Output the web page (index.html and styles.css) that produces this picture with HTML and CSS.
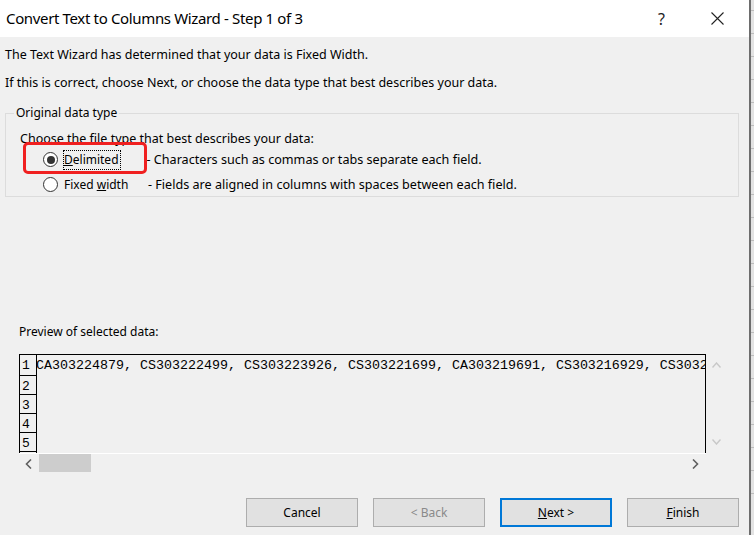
FILE: index.html
```html
<!DOCTYPE html>
<html>
<head>
<meta charset="utf-8">
<link rel="stylesheet" href="styles.css">
</head>
<body>
<div class="screen">
  <div class="dialog">
    <div class="titlebar">
      <span class="title">Convert Text to Columns Wizard - Step 1 of 3</span>
      <span class="help">?</span>
      <svg class="close" width="13" height="13" viewBox="0 0 13 13"><path d="M0.5 0.5 L12.5 12.5 M12.5 0.5 L0.5 12.5" stroke="#222" stroke-width="1.1" fill="none"/></svg>
    </div>
    <div class="body">
      <p class="info first">The Text Wizard has determined that your data is Fixed Width.</p>
      <p class="info second">If this is correct, choose Next, or choose the data type that best describes your data.</p>
      <fieldset class="group">
        <legend>Original data type</legend>
        <div class="choose">Choose the file type that best describes your data:</div>
        <div class="radio-row">
          <span class="radio checked"></span>
          <span class="label focused"><u>D</u>elimited</span>
          <span class="desc">- Characters such as commas or tabs separate each field.</span>
        </div>
        <div class="radio-row">
          <span class="radio"></span>
          <span class="label">Fixed <u>w</u>idth</span>
          <span class="desc">- Fields are aligned in columns with spaces between each field.</span>
        </div>
        <div class="highlight"></div>
      </fieldset>
      <div class="preview-label">Preview of selected data:</div>
      <div class="preview-wrap">
        <div class="preview">
          <div class="rownums">
            <div class="rn first-rn">1</div>
            <div class="rn">2</div>
            <div class="rn">3</div>
            <div class="rn">4</div>
            <div class="rn">5</div>
          </div>
          <div class="data">CA303224879, CS303222499, CS303223926, CS303221699, CA303219691, CS303216929, CS3032</div>
        </div>
        <div class="vscroll">
          <svg width="9" height="6" viewBox="0 0 9 6"><path d="M0.5 5.5 L4.5 1 L8.5 5.5" stroke="#c8c8c8" stroke-width="1.4" fill="none"/></svg>
          <svg width="9" height="6" viewBox="0 0 9 6"><path d="M0.5 0.5 L4.5 5 L8.5 0.5" stroke="#c8c8c8" stroke-width="1.4" fill="none"/></svg>
        </div>
      </div>
      <div class="hscroll">
        <svg class="arrow" width="7" height="10" viewBox="0 0 7 10"><path d="M6 0.5 L1.5 5 L6 9.5" stroke="#606060" stroke-width="1.6" fill="none"/></svg>
        <div class="thumb"></div>
        <div class="track"></div>
        <svg class="arrow" width="7" height="10" viewBox="0 0 7 10"><path d="M1 0.5 L5.5 5 L1 9.5" stroke="#606060" stroke-width="1.6" fill="none"/></svg>
      </div>
      <div class="buttons">
        <button class="btn">Cancel</button>
        <button class="btn disabled">&lt; Back</button>
        <button class="btn default"><u>N</u>ext &gt;</button>
        <button class="btn"><u>F</u>inish</button>
      </div>
    </div>
  </div>
  <div class="sheet">
    <div class="cell"></div><div class="cell"></div><div class="cell"></div><div class="cell"></div>
    <div class="cell"></div><div class="cell"></div><div class="cell"></div><div class="cell"></div>
    <div class="cell"></div><div class="cell"></div><div class="cell"></div><div class="cell"></div>
    <div class="cell"></div><div class="cell"></div><div class="cell"></div><div class="cell"></div>
    <div class="cell"></div><div class="cell"></div><div class="cell"></div><div class="cell"></div>
    <div class="cell"></div><div class="cell"></div>
  </div>
</div>
</body>
</html>
```

FILE: styles.css
```css
* { box-sizing: border-box; }
html, body { margin: 0; padding: 0; }
body {
  width: 754px;
  height: 535px;
  overflow: hidden;
  font-family: "Noto Sans", "Open Sans", sans-serif;
  font-size: 12px;
  color: #000;
  background: #f0f0f0;
}
.screen {
  display: flex;
  width: 754px;
  height: 535px;
  overflow: hidden;
}
.dialog {
  width: 749px;
  height: 535px;
  background: #f0f0f0;
  display: flex;
  flex-direction: column;
  overflow: hidden;
}
.titlebar {
  height: 37px;
  flex: none;
  background: #fff;
  display: flex;
  align-items: center;
  padding-left: 6px;
}
.title {
  font-size: 15px;
  letter-spacing: -0.35px;
  color: #000;
  flex: 1;
  padding-bottom: 1px;
}
.help {
  font-size: 16px;
  margin-right: 46px;
  color: #222;
}
.close {
  margin-right: 25px;
}
.body {
  padding: 0 0 0 5px;
  position: relative;
  flex: 1;
}
.info {
  margin: 0;
  font-size: 12.5px;
  line-height: 16px;
}
.info.first { margin-top: 10px; }
.info.second { margin-top: 12px; }
.group {
  margin: 15px 0 0 0;
  width: 734px;
  height: 91px;
  border: 1px solid #dcdcdc;
  padding: 0 0 0 14px;
  position: relative;
}
.group legend {
  padding: 0 2px;
  margin-left: -6px;
  line-height: 14px;
  font-size: 12px;
}
.choose {
  margin-top: 11px;
  line-height: 16px;
  font-size: 12.5px;
}
.radio-row {
  display: flex;
  align-items: center;
  height: 25px;
  padding-left: 23px;
}
.radio-row:first-of-type { margin-top: 2px; }
.radio {
  width: 15px;
  height: 15px;
  flex: none;
  border: 1px solid #333;
  border-radius: 50%;
  background: #fff;
  display: flex;
  align-items: center;
  justify-content: center;
  margin-right: 5px;
}
.radio.checked::after {
  content: "";
  width: 8px;
  height: 8px;
  border-radius: 50%;
  background: #333;
}
.label {
  width: 85px;
  padding: 1px 2px 2px 1px;
  flex: none;
}
.label.focused {
  width: auto;
  outline: 1px dotted #000;
  outline-offset: -1px;
  padding: 1px 2px 2px 1px;
  margin-right: 26px;
}
.desc { font-size: 12.6px; }
.highlight {
  position: absolute;
  left: 17px;
  top: 22px;
  width: 124px;
  height: 32px;
  border: 3px solid #f02020;
  border-radius: 5px;
}
.preview-label {
  margin-top: 127px;
  margin-left: 14px;
  line-height: 16px;
}
.preview-wrap {
  display: flex;
  margin-top: 14px;
  margin-left: 14px;
}
.preview {
  width: 687px;
  height: 99px;
  border: 1px solid #000;
  border-bottom: none;
  display: flex;
  overflow: hidden;
}
.rownums {
  width: 17px;
  flex: none;
  border-right: 1px solid #000;
}
.rn {
  height: 19px;
  border-bottom: 1px solid #000;
  font-family: "Liberation Mono", monospace;
  font-size: 13px;
  line-height: 22px;
  padding-left: 2px;
}
.rn.first-rn { height: 21px; }
.data {
  font-family: "Liberation Mono", monospace;
  font-size: 13.33px;
  white-space: pre;
  line-height: 22px;
  margin-left: -1px;
}
.vscroll {
  display: flex;
  flex-direction: column;
  justify-content: space-between;
  padding: 8px 0 8px 6px;
  height: 99px;
}
.hscroll {
  margin-left: 14px;
  width: 687px;
  height: 19px;
  border-top: 1px solid #fff;
  display: flex;
  align-items: center;
}
.hscroll .arrow { margin: 1px 7px 0 6px; flex: none; }
.thumb {
  width: 52px;
  height: 18px;
  background: #cdcdcd;
  align-self: flex-start;
}
.track { flex: 1; }
.buttons {
  display: flex;
  gap: 15px;
  margin-top: 26px;
  margin-left: 241px;
}
.btn {
  width: 112px;
  height: 29px;
  background: #e1e1e1;
  border: 1px solid #adadad;
  font-family: "Noto Sans", "Open Sans", sans-serif;
  font-size: 12px;
  color: #000;
  padding: 0;
}
.btn.disabled { color: #8a8a8a; }
.btn.default { border: 2px solid #0078d7; }
.sheet {
  width: 5px;
  height: 535px;
  flex: none;
  overflow: hidden;
  border-left: 2px solid #6d6d6d;
  background: #e3e3e3;
  padding-top: 10px;
}
.cell {
  height: 23px;
  border-top: 1px solid #bdbdbd;
}
```
